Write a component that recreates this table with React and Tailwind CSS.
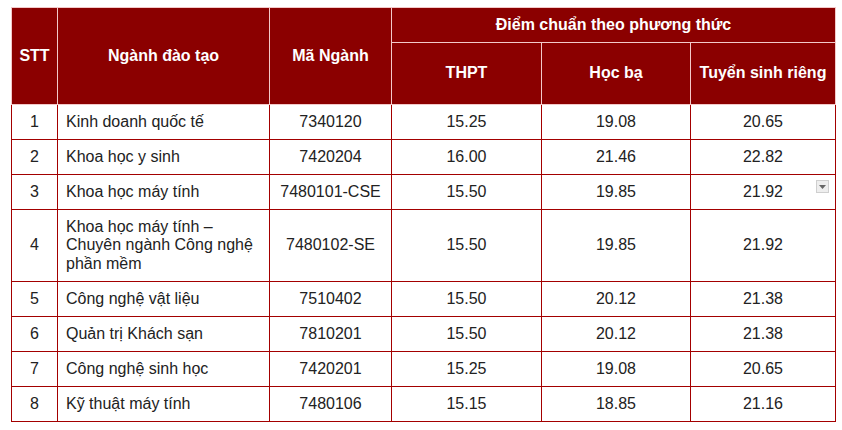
import React from "react";

const rows = [
  { stt: 1, name: "Kinh doanh quốc tế", code: "7340120", thpt: "15.25", hocba: "19.08", rieng: "20.65" },
  { stt: 2, name: "Khoa học y sinh", code: "7420204", thpt: "16.00", hocba: "21.46", rieng: "22.82" },
  { stt: 3, name: "Khoa học máy tính", code: "7480101-CSE", thpt: "15.50", hocba: "19.85", rieng: "21.92", dropdown: true },
  { stt: 4, name: "Khoa học máy tính – Chuyên ngành Công nghệ phần mềm", code: "7480102-SE", thpt: "15.50", hocba: "19.85", rieng: "21.92", tall: true },
  { stt: 5, name: "Công nghệ vật liệu", code: "7510402", thpt: "15.50", hocba: "20.12", rieng: "21.38" },
  { stt: 6, name: "Quản trị Khách sạn", code: "7810201", thpt: "15.50", hocba: "20.12", rieng: "21.38" },
  { stt: 7, name: "Công nghệ sinh học", code: "7420201", thpt: "15.25", hocba: "19.08", rieng: "20.65" },
  { stt: 8, name: "Kỹ thuật máy tính", code: "7480106", thpt: "15.15", hocba: "18.85", rieng: "21.16" },
];

export default function App() {
  return (
    <div
      className="w-[842px] h-[430px] bg-white pt-[7px] pl-[11px] text-[16px] leading-[18.4px] text-[#222]"
      style={{ fontFamily: '"Liberation Sans", Arial, sans-serif' }}
    >
      <table className="table-fixed border-collapse w-[824px]">
        <colgroup>
          <col className="w-[46px]" />
          <col className="w-[212px]" />
          <col className="w-[122px]" />
          <col className="w-[150px]" />
          <col className="w-[149px]" />
          <col className="w-[145px]" />
        </colgroup>
        <thead className="bg-[#8b0000] text-white font-bold">
          <tr className="h-[35px]">
            <th rowSpan={2} className="border border-[#f3c9c9] text-center align-middle">STT</th>
            <th rowSpan={2} className="border border-[#f3c9c9] text-center align-middle">Ngành đào tạo</th>
            <th rowSpan={2} className="border border-[#f3c9c9] text-center align-middle">Mã Ngành</th>
            <th colSpan={3} className="border border-[#f3c9c9] text-center align-middle">Điểm chuẩn theo phương thức</th>
          </tr>
          <tr className="h-[62px]">
            <th className="border border-[#f3c9c9] text-center align-middle">THPT</th>
            <th className="border border-[#f3c9c9] text-center align-middle">Học bạ</th>
            <th className="border border-[#f3c9c9] text-center align-middle">Tuyển sinh riêng</th>
          </tr>
        </thead>
        <tbody>
          {rows.map((r) => (
            <tr key={r.stt} className={r.tall ? "h-[72px]" : "h-[35px]"}>
              <td className="border border-[#a30000] text-center align-middle">{r.stt}</td>
              <td className="border border-[#a30000] px-[8px] align-middle">{r.name}</td>
              <td className="border border-[#a30000] text-center align-middle">{r.code}</td>
              <td className="border border-[#a30000] text-center align-middle">{r.thpt}</td>
              <td className="border border-[#a30000] text-center align-middle">{r.hocba}</td>
              <td className="relative border border-[#a30000] text-center align-middle">
                {r.rieng}
                {r.dropdown && (
                  <span className="absolute right-[6px] top-[5px] w-[13px] h-[13px] bg-[#eeeeee] border border-[#cfcfcf] flex items-center justify-center">
                    <svg width="7" height="4" viewBox="0 0 7 4">
                      <path d="M0 0h7L3.5 4z" fill="#666" />
                    </svg>
                  </span>
                )}
              </td>
            </tr>
          ))}
        </tbody>
      </table>
    </div>
  );
}
